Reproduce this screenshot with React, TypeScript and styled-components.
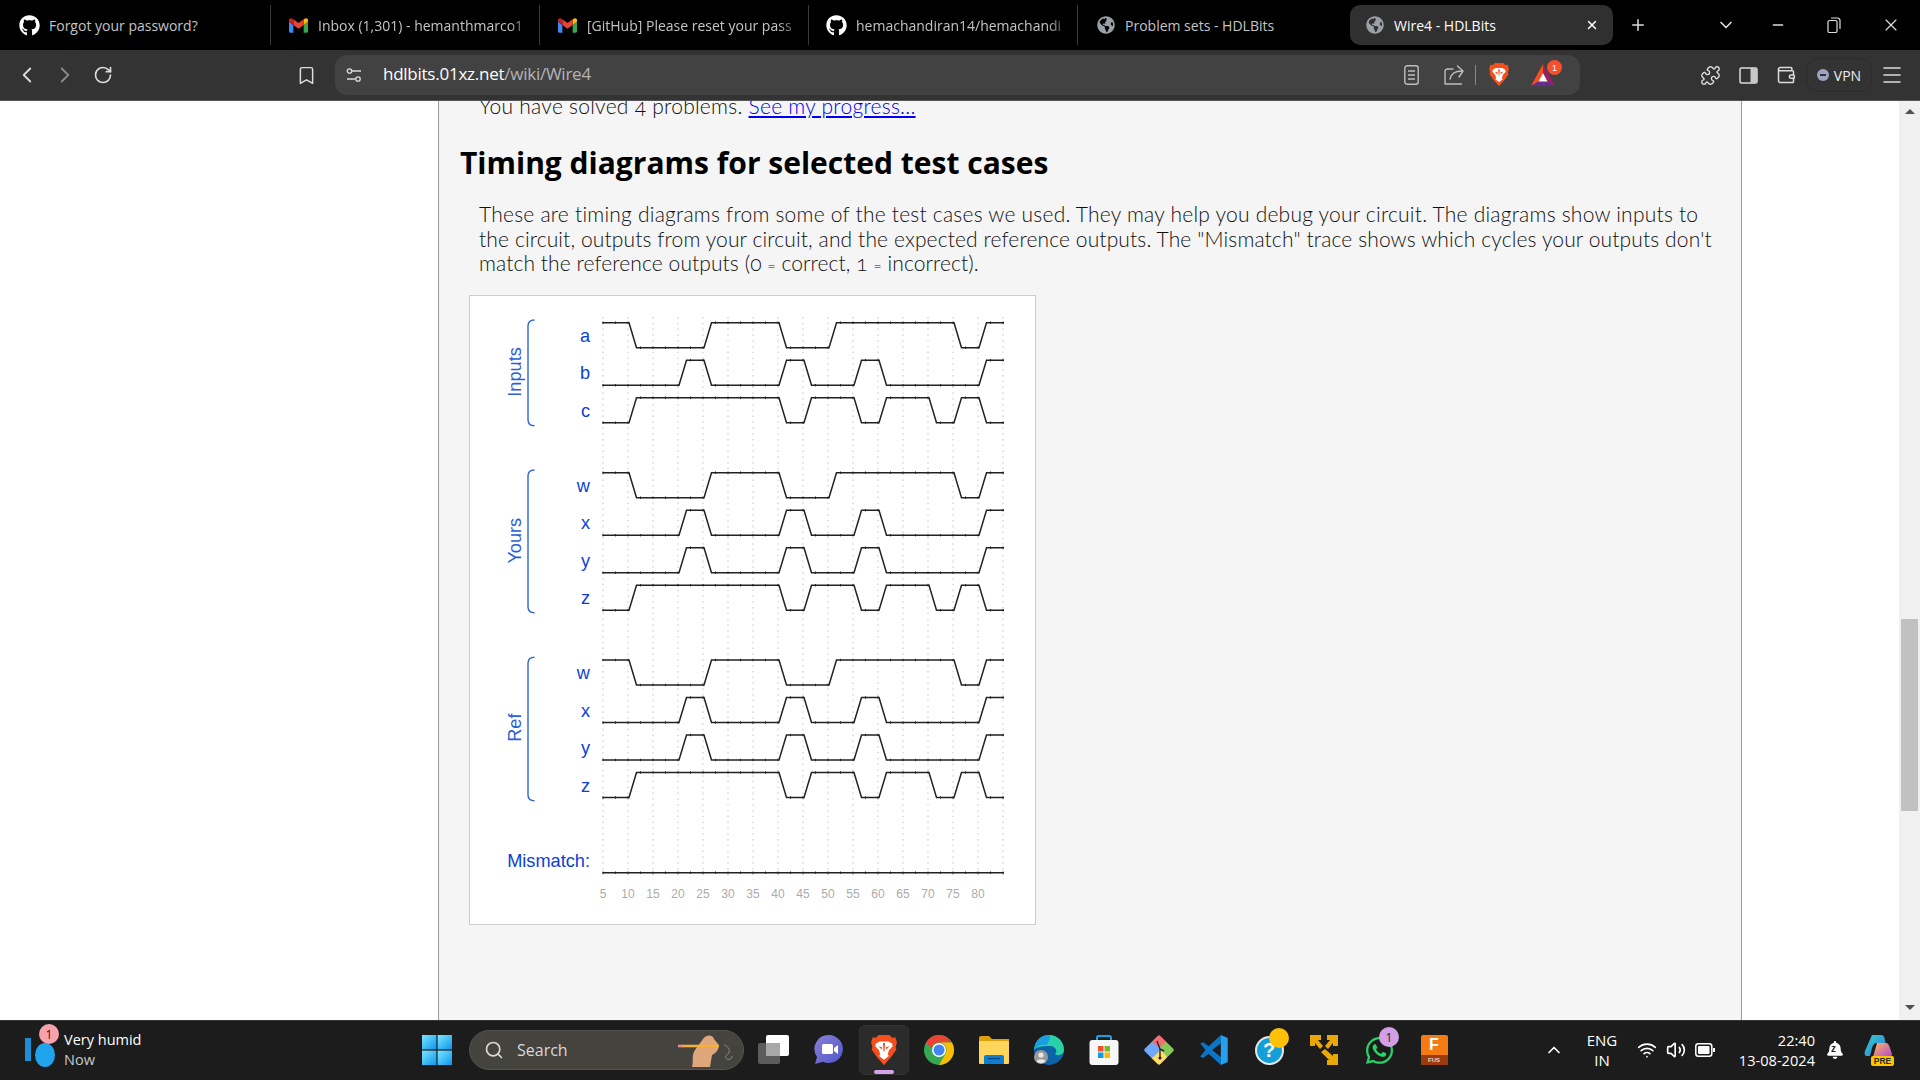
import React from "react";
import styled, { createGlobalStyle } from "styled-components";
import {
  Bookmark,
  ChevronDown,
  ChevronLeft,
  ChevronRight,
  ChevronUp,
  Menu,
  Minus,
  Plus,
  Puzzle,
  RotateCw,
  Search,
  Volume2,
  Wallet,
  Wifi,
  X,
} from "lucide-react";
import { FaBell, FaGithub, FaGlobeAmericas, FaWhatsapp } from "react-icons/fa";

const UI_FONT = `"Open Sans", "Liberation Sans", sans-serif`;

const GlobalStyle = createGlobalStyle`
  html, body {
    margin: 0;
    padding: 0;
    width: 1920px;
    height: 1080px;
    overflow: hidden;
    background: #fff;
  }
  * { box-sizing: border-box; }
`;

const Screen = styled.div`
  width: 1920px;
  height: 1080px;
  display: flex;
  flex-direction: column;
  overflow: hidden;
`;

/* ---------- tab strip ---------- */

const TabBar = styled.div`
  height: 50px;
  flex: none;
  background: #000;
  display: flex;
  align-items: center;
  padding-left: 2px;
  font-family: ${UI_FONT};
`;

const Tab = styled.div<{ $active?: boolean; $divider?: boolean }>`
  width: ${(p) => (p.$active ? "263px" : "269px")};
  height: 40px;
  flex: none;
  margin: ${(p) => (p.$active ? "0 3px" : "0")};
  display: flex;
  align-items: center;
  gap: 9px;
  padding: 0 4px 0 ${(p) => (p.$active ? "14px" : "17px")};
  font-size: 14px;
  color: ${(p) => (p.$active ? "#fff" : "#c4c4c4")};
  background: ${(p) => (p.$active ? "#303030" : "transparent")};
  border-radius: ${(p) => (p.$active ? "10px" : "0")};
  border-right: ${(p) => (p.$active ? "none" : p.$divider ? "1px solid #3a3a3a" : "1px solid transparent")};
`;

const TabIcon = styled.span`
  width: 21px;
  height: 21px;
  flex: none;
  display: flex;
  align-items: center;
  justify-content: center;
`;

const TabTitle = styled.span<{ $fade?: boolean }>`
  flex: 1;
  min-width: 0;
  white-space: nowrap;
  ${(p) =>
    p.$fade &&
    `mask-image: linear-gradient(to right, #000 88%, transparent 100%);`}
`;

const TabClose = styled.span`
  display: flex;
  color: #fff;
  margin-right: 10px;
`;

const StripButton = styled.span<{ $w: number; $ml?: number }>`
  width: ${(p) => p.$w}px;
  margin-left: ${(p) => p.$ml ?? 0}px;
  flex: none;
  display: flex;
  justify-content: center;
  color: #ddd;
`;

/* ---------- toolbar ---------- */

const Toolbar = styled.div`
  height: 50px;
  flex: none;
  background: #333;
  display: flex;
  align-items: center;
  padding-left: 8px;
  font-family: ${UI_FONT};
`;

const ToolButton = styled.span<{ $w?: number; $ml?: number; $dim?: boolean }>`
  width: ${(p) => p.$w ?? 38}px;
  margin-left: ${(p) => p.$ml ?? 0}px;
  flex: none;
  display: flex;
  align-items: center;
  justify-content: center;
  color: ${(p) => (p.$dim ? "#8a8a8a" : "#dcdcdc")};
`;

const AddressPill = styled.div`
  width: 1245px;
  height: 40px;
  margin-left: 10px;
  flex: none;
  background: #424242;
  border-radius: 12px;
  display: flex;
  align-items: center;
  padding: 0 16px 0 9px;
`;

const Url = styled.div`
  margin-left: 19px;
  font-size: 17px;
  letter-spacing: -0.25px;
  line-height: 22px;
  margin-top: -2px;
  color: #fff;
  white-space: nowrap;
  span {
    color: #b4b4b4;
  }
`;

const AddressActions = styled.div`
  margin-left: auto;
  display: flex;
  align-items: center;
`;

const ActionDivider = styled.span`
  width: 1px;
  height: 20px;
  background: #8a8a8a;
  flex: none;
`;

const BatWrap = styled.span`
  position: relative;
  display: flex;
`;

const RedDot = styled.span`
  position: absolute;
  top: -4px;
  right: -7px;
  width: 15px;
  height: 15px;
  border-radius: 50%;
  background: #f4512c;
  color: #fff;
  font: 9px "Liberation Sans", sans-serif;
  display: flex;
  align-items: center;
  justify-content: center;
`;

const VpnPill = styled.div`
  width: 66px;
  height: 34px;
  margin-left: 1px;
  flex: none;
  border: 1px solid #2c2c2c;
  border-radius: 12px;
  display: flex;
  align-items: center;
  justify-content: center;
  gap: 5px;
  color: #eee;
  font-size: 14px;
`;

const VpnDot = styled.span`
  width: 12px;
  height: 12px;
  border-radius: 50%;
  background: #9da3c0;
  display: flex;
  align-items: center;
  justify-content: center;
  &::after {
    content: "";
    width: 6px;
    height: 2px;
    background: #333;
  }
`;

/* ---------- page ---------- */

const Viewport = styled.div`
  height: 920px;
  flex: none;
  display: flex;
  background: #fff;
  overflow: hidden;
  border-top: 1px solid #555;
`;

const PageArea = styled.div`
  flex: 1;
  padding-left: 438px;
`;

const Panel = styled.main`
  width: 1304px;
  height: 100%;
  background: #f5f5f5;
  border-left: 1px solid #999;
  border-right: 1px solid #999;
  color: #111;
  overflow: hidden;
`;

const BodyText = styled.p`
  margin: 0 0 0 40px;
  font-family: Lato, "Liberation Sans", sans-serif;
  font-weight: 300;
  font-size: 21px;
  line-height: 24.3px;
  letter-spacing: 0.17px;
  font-variant-numeric: oldstyle-nums;
  white-space: nowrap;
`;

const TextLine = styled.span<{ $spacing: number }>`
  display: block;
  letter-spacing: ${(p) => p.$spacing}px;
`;

const ProgressLine = styled(BodyText)`
  margin-top: -7px;
  letter-spacing: 0.26px;
  a {
    color: #0000ee;
    text-decoration: underline;
  }
`;

const SmallSign = styled.span`
  font-size: 15px;
`;

const Heading = styled.h2`
  margin: 25px 0 19px 21px;
  font-family: "Open Sans", "Liberation Sans", sans-serif;
  font-weight: 700;
  font-size: 30px;
  line-height: 40px;
  color: #000;
`;

const DiagramFrame = styled.figure`
  margin: 18px 0 0 30px;
  width: 567px;
  height: 630px;
  background: #fff;
  border: 1px solid #ccc;
`;

const ChartSvg = styled.svg`
  display: block;
  width: 565px;
  height: 628px;
`;

const SignalLabel = styled.text`
  font-family: "Liberation Sans", sans-serif;
  font-size: 18.2px;
  fill: #0b3fd6;
`;

const GroupLabel = styled(SignalLabel)`
  fill: #2b5fd8;
`;

const TickLabel = styled.text`
  font-family: "Liberation Sans", sans-serif;
  font-size: 12px;
  fill: #ababab;
  text-anchor: middle;
`;

const Scrollbar = styled.div`
  width: 21px;
  flex: none;
  background: #f0f0f0;
  display: flex;
  flex-direction: column;
  align-items: center;
  padding-top: 8px;
`;

const ScrollArrow = styled.span<{ $down?: boolean }>`
  width: 0;
  height: 0;
  border-left: 5px solid transparent;
  border-right: 5px solid transparent;
  ${(p) =>
    p.$down
      ? `border-top: 5px solid #505050; margin-top: 194px;`
      : `border-bottom: 5px solid #505050;`}
`;

const ScrollThumb = styled.div`
  width: 17px;
  height: 192px;
  margin-top: 505px;
  background: #c1c1c1;
`;

/* ---------- taskbar ---------- */

const Taskbar = styled.footer`
  height: 60px;
  flex: none;
  background: #1c1c1c;
  border-top: 1px solid #333;
  padding-bottom: 1px;
  display: flex;
  align-items: center;
  font-family: ${UI_FONT};
  color: #fff;
`;

const WeatherBlock = styled.div`
  width: 412px;
  flex: none;
  display: flex;
  align-items: center;
  padding-left: 25px;
`;

const WeatherIcon = styled.span`
  position: relative;
  width: 31px;
  height: 30px;
  flex: none;
  display: flex;
  margin-top: 6px;
`;

const PinkBadge = styled.span`
  position: absolute;
  left: 14px;
  top: -14px;
  width: 20px;
  height: 20px;
  border-radius: 50%;
  background: #f9a2ad;
  color: #222;
  font-size: 12px;
  display: flex;
  align-items: center;
  justify-content: center;
`;

const WeatherText = styled.div`
  margin-left: 8px;
  font-size: 14.5px;
  line-height: 20px;
  color: #fff;
  small {
    display: block;
    font-size: 14.5px;
    color: #c8c8c8;
  }
`;

const TaskTile = styled.span<{ $active?: boolean; $w?: number }>`
  width: ${(p) => p.$w ?? 50}px;
  height: 50px;
  flex: none;
  margin-right: 5px;
  display: flex;
  align-items: center;
  justify-content: center;
  position: relative;
  border-radius: 6px;
  ${(p) => p.$active && `background: #2b2b2b; border: 1px solid #333;`}
`;

const ActiveMark = styled.span`
  position: absolute;
  bottom: 0;
  left: 14px;
  width: 20px;
  height: 4px;
  border-radius: 2px;
  background: #d8a0e6;
`;

const SearchPill = styled.div`
  width: 275px;
  height: 40px;
  flex: none;
  margin: 0 5px 0 2px;
  border-radius: 20px;
  background: #45433e;
  border: 1px solid #55534d;
  display: flex;
  align-items: center;
  padding: 0 8px 0 14px;
  gap: 13px;
  font-size: 16px;
  color: #d8d8d8;
`;

const HandArt = styled.span`
  margin-left: auto;
  display: flex;
`;

const LilacBadge = styled.span`
  position: absolute;
  right: 5px;
  top: 2px;
  width: 20px;
  height: 20px;
  border-radius: 50%;
  background: #d29fe6;
  color: #222;
  font-size: 12px;
  display: flex;
  align-items: center;
  justify-content: center;
`;

const YellowDot = styled.span`
  position: absolute;
  right: 5px;
  top: 3px;
  width: 20px;
  height: 20px;
  border-radius: 50%;
  background: #ffc107;
`;

const Tray = styled.div`
  margin-left: 71px;
  display: flex;
  align-items: center;
`;

const TrayItem = styled.span<{ $w: number }>`
  width: ${(p) => p.$w}px;
  flex: none;
  display: flex;
  align-items: center;
  justify-content: center;
  color: #fff;
`;

const LangStack = styled(TrayItem)`
  flex-direction: column;
  font-size: 15px;
  line-height: 20px;
`;

const ClockStack = styled(TrayItem)`
  flex-direction: column;
  align-items: flex-end;
  padding-right: 2px;
  font-size: 14.6px;
  line-height: 20px;
`;

const BellWrap = styled.span`
  position: relative;
  display: flex;
`;

const BellZ = styled.span`
  position: absolute;
  left: 5px;
  top: 2px;
  font: bold 10px "Liberation Sans", sans-serif;
  color: #222;
`;

/* ---------- drawn icons ---------- */

const GmailIcon = () => (
  <svg width="19" height="15" viewBox="0 0 24 18">
    <path fill="#4285F4" d="M1.5 18H5.5V8.3L0 4.2V16.5C0 17.3.7 18 1.5 18z" />
    <path fill="#34A853" d="M18.5 18h4c.8 0 1.5-.7 1.5-1.5V4.2l-5.5 4.1z" />
    <path fill="#FBBC04" d="M18.5 1v7.3L24 4.2V2.3c0-2-2.2-3.1-3.8-1.9z" />
    <path fill="#EA4335" d="M5.5 8.3V1L12 5.9 18.5 1v7.3L12 13.2z" />
    <path fill="#C5221F" d="M0 2.3v1.9l5.5 4.1V1L3.8.4C2.2-.8 0 .3 0 2.3z" />
  </svg>
);

const TuneIcon = () => (
  <svg width="16" height="16" viewBox="0 0 16 16" fill="none" stroke="#dcdcdc" strokeWidth="1.3">
    <circle cx="3.5" cy="4" r="2.2" />
    <path d="M6 4h9M1 12h8.5" />
    <circle cx="12" cy="12" r="2.2" />
  </svg>
);

const BraveIcon = ({ size }: { size: number }) => (
  <svg width={size} height={size * 1.16} viewBox="0 0 24 28">
    <path
      fill="#f4501e"
      d="M7 0H17L19.5 2.5 22.5 2 24 7 22.8 11 23.5 13.5 19 20 12 28 5 20 .5 13.5 1.2 11 0 7 1.5 2 4.5 2.5z"
    />
    <path
      fill="#fff"
      d="M8 6H16L19.5 8 20 10.5 16.5 14.5 15.5 18 16.5 19.5 12 23 7.5 19.5 8.5 18 7.5 14.5 4 10.5 4.5 8z"
    />
    <path fill="#f4501e" d="M6.8 10.5 10.3 11.3 9.8 13.5zM17.2 10.5 13.7 11.3 14.2 13.5zM11 7.5H13L12.5 15H11.5z" />
  </svg>
);

const BatIcon = () => (
  <svg width="24" height="22" viewBox="0 0 24 22">
    <path fill="#f4501e" d="M12 0 0 22 7.5 17.5 12 9z" />
    <path fill="#9e1f63" d="M12 0 24 22 16.5 17.5 12 9z" />
    <path fill="#662d91" d="M0 22H24L16.5 17.5H7.5z" />
    <path fill="#fff" d="M12 9 16.5 17.5H7.5z" />
  </svg>
);

const ReaderIcon = () => (
  <svg width="15" height="20" viewBox="0 0 15 20" fill="none" stroke="#bdbdbd" strokeWidth="1.4">
    <rect x=".8" y=".8" width="13.4" height="18.4" rx="2.5" />
    <path d="M4 6h7M4 10h7M4 14h7" />
  </svg>
);

const ShareIcon = () => (
  <svg width="21" height="20" viewBox="0 0 21 20" fill="none" stroke="#bdbdbd" strokeWidth="1.4">
    <path d="M9 4H3.5A2.5 2.5 0 0 0 1 6.5V19h16.5" strokeLinecap="round" strokeLinejoin="round" />
    <path d="M6 14c1-5 5-8 12-8M13.5 1 19 6l-4 6" strokeLinecap="round" strokeLinejoin="round" />
  </svg>
);

const SidebarIcon = () => (
  <svg width="19" height="17" viewBox="0 0 19 17">
    <rect x="1" y="1" width="17" height="15" rx="1.5" fill="none" stroke="#dcdcdc" strokeWidth="1.5" />
    <rect x="11.5" y="1" width="6.5" height="15" fill="#c8c8c8" />
  </svg>
);

const RestoreIcon = () => (
  <svg width="14" height="16" viewBox="0 0 14 16" fill="none" stroke="#ddd" strokeWidth="1.2">
    <rect x="1" y="3.5" width="9" height="12" rx="1.5" />
    <path d="M4 1h6.5A2.5 2.5 0 0 1 13 3.5V12" />
  </svg>
);

const WindowsLogo = () => (
  <svg width="30" height="30" viewBox="0 0 30 30">
    <defs>
      <linearGradient id="winBlue" x1="0" y1="0" x2="1" y2="1">
        <stop offset="0" stopColor="#7be6ff" />
        <stop offset="1" stopColor="#0d95ee" />
      </linearGradient>
    </defs>
    <rect x="0" y="0" width="14.4" height="14.4" fill="url(#winBlue)" />
    <rect x="15.6" y="0" width="14.4" height="14.4" fill="url(#winBlue)" />
    <rect x="0" y="15.6" width="14.4" height="14.4" fill="url(#winBlue)" />
    <rect x="15.6" y="15.6" width="14.4" height="14.4" fill="url(#winBlue)" />
  </svg>
);

const HandPencil = () => (
  <svg width="58" height="36" viewBox="0 0 58 36">
    <path
      d="M15 35C17 28 14 24 18 18L26 7C30 2 36 3 37 7L41 12C43 17 39 21 35 23L33 35z"
      fill="#dfa67c"
    />
    <path d="M4 14H42" stroke="#f3b230" strokeWidth="2.6" />
    <path d="M1 14H6" stroke="#e88a8a" strokeWidth="2.6" />
    <path d="M47 13c4 2 6 3 5 7s-5 3-3 6 6 1 6-2" fill="none" stroke="#8a8a8a" strokeWidth="1" />
  </svg>
);

const TaskViewIcon = () => (
  <svg width="32" height="32" viewBox="0 0 32 32">
    <rect x="0" y="9" width="22" height="21" rx="2" fill="#5c5c5c" />
    <rect x="8" y="1" width="23" height="21" rx="2" fill="#fff" />
    <rect x="8" y="9" width="14" height="13" fill="#a8a8a8" />
  </svg>
);

const MeetIcon = () => (
  <svg width="30" height="32" viewBox="0 0 30 32">
    <defs>
      <linearGradient id="meetBlue" x1="0" y1="0" x2="1" y2="1">
        <stop offset="0" stopColor="#8b7fd8" />
        <stop offset="1" stopColor="#4f58c8" />
      </linearGradient>
    </defs>
    <path d="M15 1a14 14 0 1 1-6 26.7L1 30l2-7A14 14 0 0 1 15 1z" fill="url(#meetBlue)" />
    <rect x="8" y="10" width="11" height="10" rx="1.5" fill="#fff" />
    <path d="M20 14l4-3v9l-4-3z" fill="#fff" />
  </svg>
);

const ChromeIcon = () => (
  <svg width="30" height="30" viewBox="0 0 24 24">
    <circle cx="12" cy="12" r="12" fill="#34a853" />
    <path fill="#ea4335" d="M1.61 6A12 12 0 0 1 22.39 6H12a6 6 0 0 0-5.2 3l-.8 1.5z" />
    <path fill="#fbbc04" d="M22.39 6A12 12 0 0 1 12 24l5.2-9a6 6 0 0 0-5.2-9z" />
    <circle cx="12" cy="12" r="5.6" fill="#fff" />
    <circle cx="12" cy="12" r="4.4" fill="#4285f4" />
  </svg>
);

const FolderIcon = () => (
  <svg width="30" height="28" viewBox="0 0 30 28">
    <path d="M0 2a2 2 0 0 1 2-2h8l3 3h17v6H0z" fill="#dd9f0c" />
    <rect x="0" y="5" width="30" height="23" rx="1" fill="#ffd65c" />
    <path d="M5 28v-7a2 2 0 0 1 2-2h16a2 2 0 0 1 2 2v7z" fill="#0c7fd0" />
    <rect x="9" y="22" width="12" height="1.2" fill="#063f80" />
  </svg>
);

const EdgeIcon = () => (
  <svg width="30" height="30" viewBox="0 0 30 30">
    <circle cx="15" cy="15" r="15" fill="#0c63a8" />
    <path d="M0 15C1 5 8 0 15 0c9 0 15 7 15 15 0 4-5 7-9 4 3-2 1-8-5-8C7 11 2 12 0 15z" fill="#2ad0a8" />
    <path d="M15 0C7 0 1 6 0 15c3-5 9-6 13-5 2-4 4-8 2-10z" fill="#1b9de0" />
    <circle cx="7" cy="22" r="7" fill="#9a9a9a" />
    <circle cx="7" cy="20" r="2.6" fill="#e8e8e8" />
    <path d="M2.5 26.5c1-3 8-3 9 0a7 7 0 0 1-9 0z" fill="#e8e8e8" />
  </svg>
);

const StoreIcon = () => (
  <svg width="30" height="30" viewBox="0 0 30 30">
    <path d="M8 6V2.5A1.5 1.5 0 0 1 9.5 1h11A1.5 1.5 0 0 1 22 2.5V6" fill="none" stroke="#12a5e8" strokeWidth="2" />
    <rect x="0.5" y="5" width="29" height="25" rx="3" fill="#f7f7f7" />
    <rect x="9" y="11" width="5.5" height="5.5" fill="#ef4f2a" />
    <rect x="15.5" y="11" width="5.5" height="5.5" fill="#7cb82f" />
    <rect x="9" y="17.5" width="5.5" height="5.5" fill="#0f9be8" />
    <rect x="15.5" y="17.5" width="5.5" height="5.5" fill="#ffb900" />
  </svg>
);

const DiamondIcon = () => (
  <svg width="30" height="30" viewBox="0 0 30 30">
    <rect x="9" y="2" width="12" height="12" rx="2" transform="rotate(45 15 8)" fill="#ef6f73" />
    <rect x="16" y="9" width="12" height="12" rx="2" transform="rotate(45 22 15)" fill="#86c957" />
    <rect x="9" y="16" width="12" height="12" rx="2" transform="rotate(45 15 22)" fill="#ffdc6b" />
    <rect x="2" y="9" width="12" height="12" rx="2" transform="rotate(45 8 15)" fill="#70a8ff" />
    <path d="M13 6l3 8 4 2M16 14v9" fill="none" stroke="#2a2a2a" strokeWidth="1.4" />
    <circle cx="16" cy="23" r="1.6" fill="#2a2a2a" />
  </svg>
);

const VsCodeIcon = () => (
  <svg width="30" height="30" viewBox="0 0 24 24">
    <path fill="#0b76c5" d="M17.5 0 7.7 9 3.3 5.7 1 6.8 5.2 12 1 17.2l2.3 1.1L7.7 15l9.8 9z" />
    <path fill="#1c1c1c" d="M17.5 6.5 10.5 12l7 5.5z" />
    <path fill="#24a0ed" d="M17.5 0 23 2.4V21.6L17.5 24z" />
  </svg>
);

const HelpIcon = styled.span`
  width: 29px;
  height: 29px;
  border-radius: 50%;
  background: #159fd8;
  border: 2px solid #e6e6e6;
  color: #fff;
  font: bold 20px "Liberation Sans", sans-serif;
  display: flex;
  align-items: center;
  justify-content: center;
`;

const ArrowsIcon = () => (
  <svg width="30" height="30" viewBox="0 0 30 30" fill="#e9a808">
    <path d="M1 0H12V5H9L14 11 11 14 6 8V11H1z" />
    <path d="M18 0H29V11H24V8L19 14 16 11 21 5H18z" />
    <path d="M12 17 16 14 24 21V19H29V30H18V25H20z" />
  </svg>
);

const FusionTile = styled.span`
  width: 27px;
  height: 30px;
  position: relative;
  display: flex;
  flex-direction: column;
  align-items: center;
  border-radius: 2px;
  background: #f47a14;
  color: #fff;
  font: bold 16px/19px "Liberation Sans", sans-serif;
  overflow: hidden;
  small {
    position: absolute;
    left: 0;
    right: 0;
    bottom: 0;
    height: 10px;
    background: #9c3c0e;
    font-size: 6px;
    line-height: 10px;
    text-align: center;
    color: #f5d5bd;
  }
`;

const BatteryIcon = () => (
  <svg width="20" height="14" viewBox="0 0 20 14">
    <rect x=".8" y=".8" width="16" height="12.4" rx="2.5" fill="none" stroke="#fff" strokeWidth="1.5" />
    <rect x="3" y="3" width="11.5" height="8" rx="1" fill="#fff" />
    <rect x="18" y="5" width="2" height="4" fill="#fff" />
  </svg>
);

const DropIcon = () => (
  <svg width="31" height="30" viewBox="0 0 31 30">
    <rect x="0" y="0" width="6" height="23" fill="#1a8fd8" />
    <ellipse cx="20" cy="17" rx="10" ry="12" fill="#20a4ee" />
  </svg>
);

const CopilotIcon = () => (
  <svg width="30" height="32" viewBox="0 0 30 32">
    <defs>
      <linearGradient id="copA" x1="0" y1="0" x2="1" y2="1">
        <stop offset="0" stopColor="#37d0c8" />
        <stop offset="1" stopColor="#2c7be0" />
      </linearGradient>
      <linearGradient id="copB" x1="0" y1="0" x2="1" y2="1">
        <stop offset="0" stopColor="#ffb657" />
        <stop offset="1" stopColor="#b048d8" />
      </linearGradient>
    </defs>
    <path d="M8 1h9c2 0 3 1 3.5 3l1 5H13c-3 0-4 2-5 5l-2 8H3C1 22 0 20 1 17z" fill="url(#copA)" />
    <path d="M13 9h9c2 0 3 2 4 5l2 6c0 2-1 3-3 3H9z" fill="url(#copB)" />
    <rect x="7" y="22" width="23" height="10" rx="2" fill="#ffc400" />
    <text x="18.5" y="30" textAnchor="middle" fontFamily="Liberation Sans" fontWeight="700" fontSize="8.5" fill="#2a2a2a">
      PRE
    </text>
  </svg>
);

/* ---------- timing diagram ---------- */

const timeToX = (t: number) => 603 + (t - 5) * 5;
const EDGE_WIDTH = 7.5;
const AMPLITUDE = 25;
const WAVE_END = 1004;

// edges = times the signal flips, start = level at the left of the trace
const A_WAVE = { start: 1, edges: [10, 25, 40, 50, 75, 80] };
const B_WAVE = { start: 0, edges: [20, 25, 40, 45, 55, 60, 80] };
const C_WAVE = { start: 0, edges: [10, 40, 45, 55, 60, 70, 75, 80] };

type WaveDef = { start: number; edges: number[] };

const Wave = ({ wave, top }: { wave: WaveDef; top: number }) => {
  const yOf = (level: number) => (level ? top : top + AMPLITUDE);
  let level = wave.start;
  const points: string[] = [`602.5,${yOf(level)}`];
  const flats: [number, number, number][] = [];
  let flatStart = 602.5;
  wave.edges.forEach((t) => {
    const x = timeToX(t) + 1;
    points.push(`${x},${yOf(level)}`);
    flats.push([flatStart, x, yOf(level)]);
    level = level ? 0 : 1;
    points.push(`${x + EDGE_WIDTH},${yOf(level)}`);
    flatStart = x + EDGE_WIDTH;
  });
  points.push(`${WAVE_END},${yOf(level)}`);
  flats.push([flatStart, WAVE_END, yOf(level)]);

  const ticks: React.ReactNode[] = [];
  for (let k = 0; k <= 32; k++) {
    const x = 603 + 12.5 * k;
    const flat = flats.find((f) => x >= f[0] && x <= f[1]);
    if (flat) ticks.push(<path key={k} d={`M${x} ${flat[2] - 1.2}v2.4`} stroke="#222" strokeWidth="1" />);
  }
  return (
    <g>
      <polyline points={points.join(" ")} fill="none" stroke="#222" strokeWidth="1.5" />
      {ticks}
    </g>
  );
};

const Bracket = ({ top, bottom }: { top: number; bottom: number }) => (
  <path
    d={`M534.5 ${top}Q528 ${top} 528 ${top + 6}V${bottom - 6}Q528 ${bottom} 534.5 ${bottom}`}
    fill="none"
    stroke="#2f65d6"
    strokeWidth="1.4"
  />
);

const Diagram = () => {
  const times = Array.from({ length: 16 }, (_, i) => 5 + i * 5);
  const gridTimes = Array.from({ length: 17 }, (_, i) => 5 + i * 5);
  const groups = [
    { name: "Inputs", cy: 372, top: 320, bottom: 425.7 },
    { name: "Yours", cy: 540.7, top: 470, bottom: 612.7 },
    { name: "Ref", cy: 727.7, top: 657.3, bottom: 800.7 },
  ];
  const rows: { label: string; wave: WaveDef; top: number }[] = [
    { label: "a", wave: A_WAVE, top: 322.7 },
    { label: "b", wave: B_WAVE, top: 360.2 },
    { label: "c", wave: C_WAVE, top: 397.7 },
    { label: "w", wave: A_WAVE, top: 472.7 },
    { label: "x", wave: B_WAVE, top: 510.2 },
    { label: "y", wave: B_WAVE, top: 547.7 },
    { label: "z", wave: C_WAVE, top: 585.2 },
    { label: "w", wave: A_WAVE, top: 660 },
    { label: "x", wave: B_WAVE, top: 697.5 },
    { label: "y", wave: B_WAVE, top: 735 },
    { label: "z", wave: C_WAVE, top: 772.5 },
  ];
  return (
    <ChartSvg viewBox="470 296 565 628">
      {gridTimes.map((t) => (
        <path key={t} d={`M${timeToX(t)} 317V880`} stroke="#c4c4c4" strokeWidth="1" strokeDasharray="1.5 4.3" />
      ))}
      {groups.map((g) => (
        <g key={g.name}>
          <GroupLabel transform={`translate(521 ${g.cy}) rotate(-90)`} textAnchor="middle">
            {g.name}
          </GroupLabel>
          <Bracket top={g.top} bottom={g.bottom} />
        </g>
      ))}
      {rows.map((r, i) => (
        <g key={i}>
          <SignalLabel x={590} y={r.top + 19} textAnchor="end">
            {r.label}
          </SignalLabel>
          <Wave wave={r.wave} top={r.top} />
        </g>
      ))}
      <SignalLabel x={590} y={866.7} textAnchor="end">
        Mismatch:
      </SignalLabel>
      <Wave wave={{ start: 0, edges: [] }} top={847.7} />
      {times.map((t) => (
        <TickLabel key={t} x={timeToX(t)} y={898}>
          {t}
        </TickLabel>
      ))}
    </ChartSvg>
  );
};

/* ---------- app ---------- */

const githubIcon = <FaGithub size={21} color="#fff" />;
const globeIcon = <FaGlobeAmericas size={18} color="#9aa0a6" />;

const tabs = [
  { title: "Forgot your password?", icon: githubIcon, divider: true },
  { title: "Inbox (1,301) - hemanthmarco1", icon: <GmailIcon />, divider: true, fade: true },
  { title: "[GitHub] Please reset your pass", icon: <GmailIcon />, divider: true, fade: true },
  { title: "hemachandiran14/hemachandi", icon: githubIcon, divider: true, fade: true },
  { title: "Problem sets - HDLBits", icon: globeIcon },
];

export default function App() {
  return (
    <Screen>
      <GlobalStyle />
      <TabBar>
        {tabs.map((tab) => (
          <Tab key={tab.title} $divider={tab.divider}>
            <TabIcon>{tab.icon}</TabIcon>
            <TabTitle $fade={tab.fade}>{tab.title}</TabTitle>
          </Tab>
        ))}
        <Tab $active>
          <TabIcon>{globeIcon}</TabIcon>
          <TabTitle>Wire4 - HDLBits</TabTitle>
          <TabClose>
            <X size={14} strokeWidth={2.5} />
          </TabClose>
        </Tab>
        <StripButton $w={24} $ml={10}>
          <Plus size={18} />
        </StripButton>
        <StripButton $w={24} $ml={64}>
          <ChevronDown size={20} />
        </StripButton>
        <StripButton $w={24} $ml={28}>
          <Minus size={16} />
        </StripButton>
        <StripButton $w={24} $ml={32}>
          <RestoreIcon />
        </StripButton>
        <StripButton $w={24} $ml={33}>
          <X size={20} strokeWidth={1.4} />
        </StripButton>
      </TabBar>

      <Toolbar>
        <ToolButton>
          <ChevronLeft size={26} strokeWidth={1.7} />
        </ToolButton>
        <ToolButton $dim>
          <ChevronRight size={26} strokeWidth={1.7} />
        </ToolButton>
        <ToolButton>
          <RotateCw size={20} strokeWidth={2} />
        </ToolButton>
        <ToolButton $ml={165}>
          <Bookmark size={21} strokeWidth={1.7} />
        </ToolButton>
        <AddressPill>
          <ToolButton $w={20}>
            <TuneIcon />
          </ToolButton>
          <Url>
            hdlbits.01xz.net<span>/wiki/Wire4</span>
          </Url>
          <AddressActions>
            <ToolButton $w={44}>
              <ReaderIcon />
            </ToolButton>
            <ToolButton $w={42}>
              <ShareIcon />
            </ToolButton>
            <ActionDivider />
            <ToolButton $w={46}>
              <BraveIcon size={20} />
            </ToolButton>
            <ToolButton $w={42}>
              <BatWrap>
                <BatIcon />
                <RedDot>1</RedDot>
              </BatWrap>
            </ToolButton>
          </AddressActions>
        </AddressPill>
        <ToolButton $ml={111}>
          <Puzzle size={21} strokeWidth={1.6} />
        </ToolButton>
        <ToolButton>
          <SidebarIcon />
        </ToolButton>
        <ToolButton>
          <Wallet size={20} strokeWidth={1.8} />
        </ToolButton>
        <VpnPill>
          <VpnDot />
          VPN
        </VpnPill>
        <ToolButton $w={40}>
          <Menu size={24} strokeWidth={1.6} />
        </ToolButton>
      </Toolbar>

      <Viewport>
        <PageArea>
          <Panel>
            <ProgressLine>
              You have solved 4 problems. <a href="#progress">See my progress...</a>
            </ProgressLine>
            <Heading>Timing diagrams for selected test cases</Heading>
            <BodyText>
              <TextLine $spacing={0.225}>
                These are timing diagrams from some of the test cases we used. They may help you debug your circuit. The diagrams show inputs to
              </TextLine>
              <TextLine $spacing={0.12}>
                the circuit, outputs from your circuit, and the expected reference outputs. The "Mismatch" trace shows which cycles your outputs don't
              </TextLine>
              <TextLine $spacing={0.09}>
                match the reference outputs (0 <SmallSign>=</SmallSign> correct, 1 <SmallSign>=</SmallSign> incorrect).
              </TextLine>
            </BodyText>
            <DiagramFrame>
              <Diagram />
            </DiagramFrame>
          </Panel>
        </PageArea>
        <Scrollbar>
          <ScrollArrow />
          <ScrollThumb />
          <ScrollArrow $down />
        </Scrollbar>
      </Viewport>

      <Taskbar>
        <WeatherBlock>
          <WeatherIcon>
            <DropIcon />
            <PinkBadge>1</PinkBadge>
          </WeatherIcon>
          <WeatherText>
            Very humid
            <small>Now</small>
          </WeatherText>
        </WeatherBlock>
        <TaskTile>
          <WindowsLogo />
        </TaskTile>
        <SearchPill>
          <Search size={20} strokeWidth={2} />
          Search
          <HandArt>
            <HandPencil />
          </HandArt>
        </SearchPill>
        <TaskTile>
          <TaskViewIcon />
        </TaskTile>
        <TaskTile>
          <MeetIcon />
        </TaskTile>
        <TaskTile $active>
          <BraveIcon size={26} />
          <ActiveMark />
        </TaskTile>
        <TaskTile>
          <ChromeIcon />
        </TaskTile>
        <TaskTile>
          <FolderIcon />
        </TaskTile>
        <TaskTile>
          <EdgeIcon />
        </TaskTile>
        <TaskTile>
          <StoreIcon />
        </TaskTile>
        <TaskTile>
          <DiamondIcon />
        </TaskTile>
        <TaskTile>
          <VsCodeIcon />
        </TaskTile>
        <TaskTile>
          <HelpIcon>?</HelpIcon>
          <YellowDot />
        </TaskTile>
        <TaskTile>
          <ArrowsIcon />
        </TaskTile>
        <TaskTile>
          <FaWhatsapp size={31} color="#25d366" />
          <LilacBadge>1</LilacBadge>
        </TaskTile>
        <TaskTile>
          <FusionTile>
            F<small>FUS</small>
          </FusionTile>
        </TaskTile>
        <Tray>
          <TrayItem $w={38}>
            <ChevronUp size={20} />
          </TrayItem>
          <LangStack $w={58}>
            <span>ENG</span>
            <span>IN</span>
          </LangStack>
          <TrayItem $w={32}>
            <Wifi size={20} />
          </TrayItem>
          <TrayItem $w={26}>
            <Volume2 size={20} />
          </TrayItem>
          <TrayItem $w={32}>
            <BatteryIcon />
          </TrayItem>
          <ClockStack $w={96}>
            <span>22:40</span>
            <span>13-08-2024</span>
          </ClockStack>
          <TrayItem $w={36}>
            <BellWrap>
              <FaBell size={18} />
              <BellZ>z</BellZ>
            </BellWrap>
          </TrayItem>
          <TrayItem $w={52}>
            <CopilotIcon />
          </TrayItem>
        </Tray>
      </Taskbar>
    </Screen>
  );
}
